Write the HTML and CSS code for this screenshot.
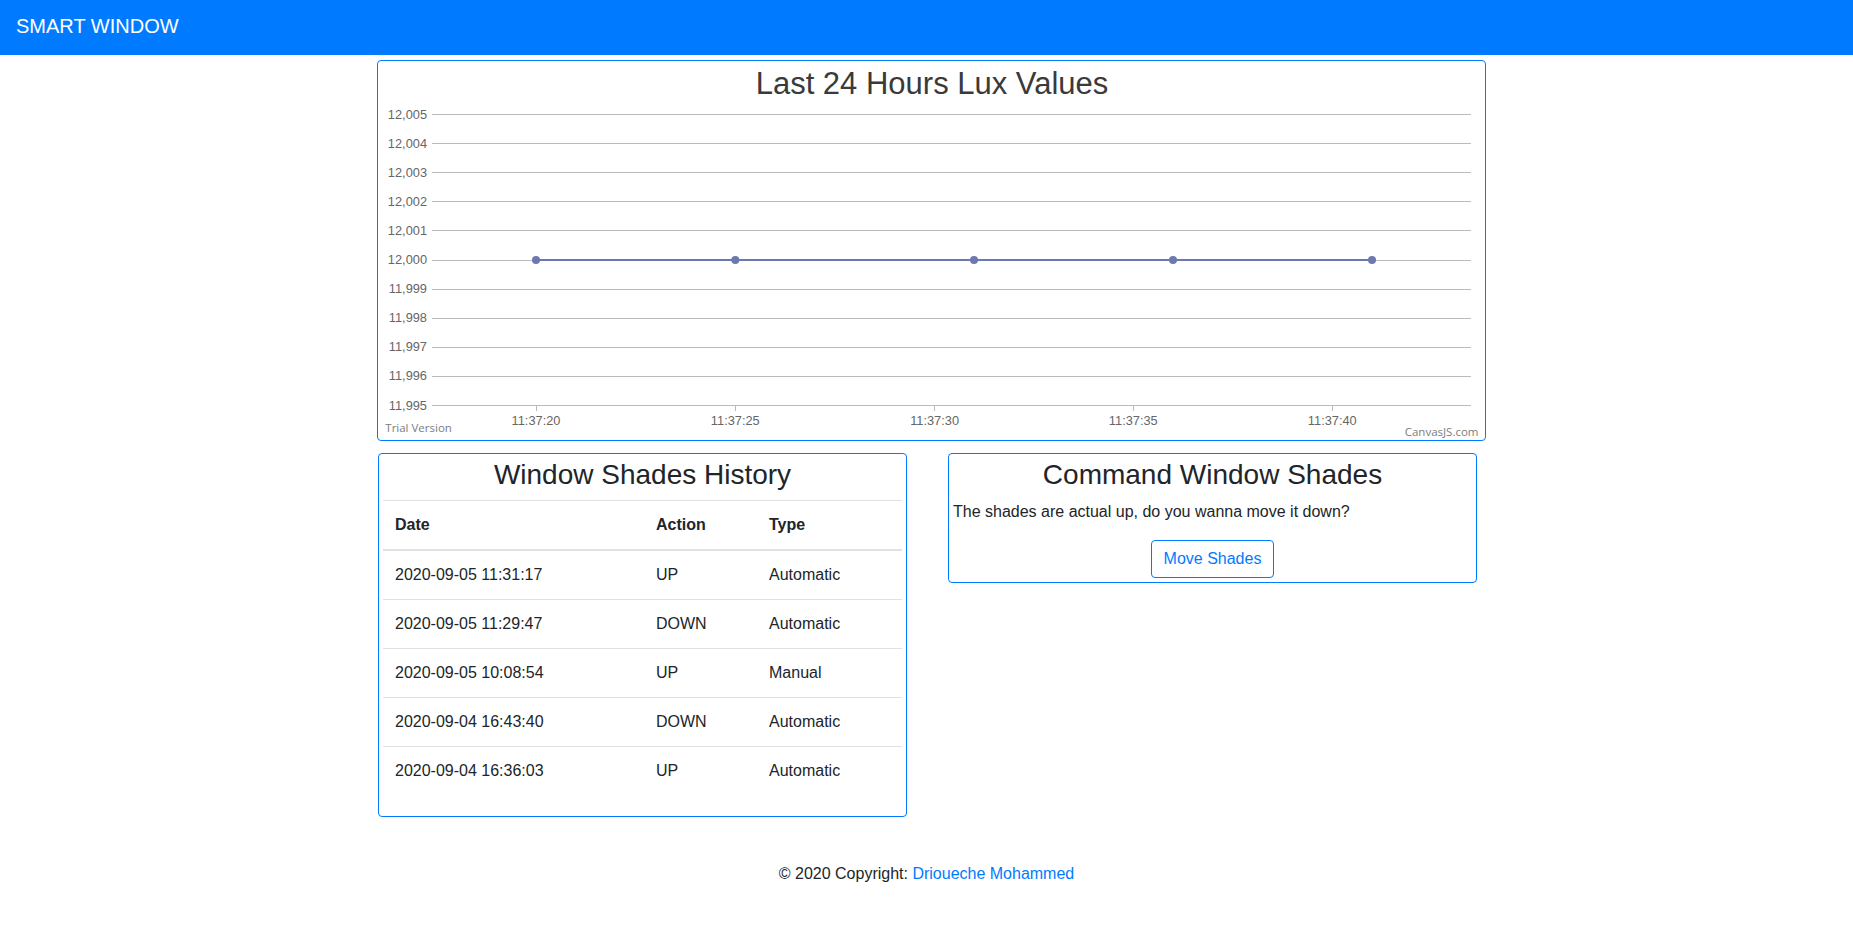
FILE: index.html
```html
<!DOCTYPE html>
<html lang="en">
<head>
<meta charset="utf-8">
<title>Smart Window</title>
<link rel="stylesheet" href="styles.css">
</head>
<body>
<nav class="navbar"><span class="brand">SMART WINDOW</span></nav>
<main class="page">
  <section class="card chart-card">
    <svg class="chart" width="1107" height="379" viewBox="0 0 1107 379" xmlns="http://www.w3.org/2000/svg">
      <text class="chart-title" x="554" y="32.7" text-anchor="middle">Last 24 Hours Lux Values</text>
      <g class="grid" shape-rendering="crispEdges">
        <line x1="54" x2="1093" y1="53.5" y2="53.5"/>
        <line x1="54" x2="1093" y1="82.6" y2="82.6"/>
        <line x1="54" x2="1093" y1="111.7" y2="111.7"/>
        <line x1="54" x2="1093" y1="140.8" y2="140.8"/>
        <line x1="54" x2="1093" y1="169.9" y2="169.9"/>
        <line x1="54" x2="1093" y1="199" y2="199"/>
        <line x1="54" x2="1093" y1="228.1" y2="228.1"/>
        <line x1="54" x2="1093" y1="257.2" y2="257.2"/>
        <line x1="54" x2="1093" y1="286.3" y2="286.3"/>
        <line x1="54" x2="1093" y1="315.4" y2="315.4"/>
        <line x1="54" x2="1093" y1="344.5" y2="344.5"/>
        <line x1="158" x2="158" y1="344.5" y2="349.5"/>
        <line x1="357.3" x2="357.3" y1="344.5" y2="349.5"/>
        <line x1="556.6" x2="556.6" y1="344.5" y2="349.5"/>
        <line x1="755.3" x2="755.3" y1="344.5" y2="349.5"/>
        <line x1="954.3" x2="954.3" y1="344.5" y2="349.5"/>
      </g>
      <g class="ylabels" text-anchor="end">
        <text x="49" y="57.5">12,005</text>
        <text x="49" y="86.6">12,004</text>
        <text x="49" y="115.7">12,003</text>
        <text x="49" y="144.8">12,002</text>
        <text x="49" y="173.9">12,001</text>
        <text x="49" y="203">12,000</text>
        <text x="49" y="232.1">11,999</text>
        <text x="49" y="261.2">11,998</text>
        <text x="49" y="290.3">11,997</text>
        <text x="49" y="319.4">11,996</text>
        <text x="49" y="348.5">11,995</text>
      </g>
      <g class="xlabels" text-anchor="middle">
        <text x="158" y="364">11:37:20</text>
        <text x="357.3" y="364">11:37:25</text>
        <text x="556.6" y="364">11:37:30</text>
        <text x="755.3" y="364">11:37:35</text>
        <text x="954.3" y="364">11:37:40</text>
      </g>
      <polyline class="series" points="158,199 357.3,199 596,199 795,199 994,199"/>
      <g class="markers">
        <circle cx="158" cy="199" r="4"/>
        <circle cx="357.3" cy="199" r="4"/>
        <circle cx="596" cy="199" r="4"/>
        <circle cx="795" cy="199" r="4"/>
        <circle cx="994" cy="199" r="4"/>
      </g>
      <text class="credit" x="7.3" y="371">Trial Version</text>
      <text class="credit" x="1100.5" y="375" text-anchor="end">CanvasJS.com</text>
    </svg>
  </section>

  <div class="row">
    <section class="card panel">
      <h3 class="panel-title">Window Shades History</h3>
      <table class="table">
        <colgroup>
          <col class="col-date">
          <col class="col-action">
          <col class="col-type">
        </colgroup>
        <thead>
          <tr><th>Date</th><th>Action</th><th>Type</th></tr>
        </thead>
        <tbody>
          <tr><td>2020-09-05 11:31:17</td><td>UP</td><td>Automatic</td></tr>
          <tr><td>2020-09-05 11:29:47</td><td>DOWN</td><td>Automatic</td></tr>
          <tr><td>2020-09-05 10:08:54</td><td>UP</td><td>Manual</td></tr>
          <tr><td>2020-09-04 16:43:40</td><td>DOWN</td><td>Automatic</td></tr>
          <tr><td>2020-09-04 16:36:03</td><td>UP</td><td>Automatic</td></tr>
        </tbody>
      </table>
    </section>

    <section class="card panel">
      <h3 class="panel-title">Command Window Shades</h3>
      <p class="panel-text">The shades are actual up, do you wanna move it down?</p>
      <div class="actions">
        <button class="btn" type="button">Move Shades</button>
      </div>
    </section>
  </div>
</main>
<footer class="footer">© 2020 Copyright: <a class="footer-link" href="#">Drioueche Mohammed</a></footer>
</body>
</html>
```

FILE: styles.css
```css
html, body {
  margin: 0;
  padding: 0;
}

body {
  font-family: "Liberation Sans", Arial, Helvetica, sans-serif;
  font-size: 16px;
  line-height: 1.5;
  color: #212529;
  background: #fff;
}

.navbar {
  box-sizing: border-box;
  height: 55px;
  padding: 11px 16px 14px;
  background: #007bff;
}

.brand {
  color: #fff;
  font-size: 20px;
  line-height: 30px;
  display: inline-block;
}

.page {
  width: 1109px;
  margin-left: calc(50% - 549.5px);
}

.card {
  box-sizing: border-box;
  border: 1px solid #007bff;
  border-radius: 4px;
  background: #fff;
}

.chart-card {
  margin-top: 5px;
  height: 381px;
}

.chart {
  display: block;
  font-family: "Liberation Sans", Arial, sans-serif;
}

.chart-title {
  font-size: 31px;
  fill: #3a3a3a;
}

.grid line {
  stroke: #bbbbbb;
  stroke-width: 1;
}

.ylabels text,
.xlabels text {
  font-size: 12.8px;
  fill: #666;
}

.series {
  fill: none;
  stroke: #6d78ad;
  stroke-width: 2;
}

.markers circle {
  fill: #6d78ad;
}

.credit {
  font-family: "Open Sans", "Noto Sans", sans-serif;
  font-size: 11.5px;
  fill: #7d7d7d;
}

.row {
  display: flex;
  align-items: flex-start;
  gap: 41px;
  margin-top: 12px;
  padding-left: 1px;
}

.panel {
  width: 529px;
  flex: 0 0 529px;
  padding: 4px;
}

.panel-title {
  margin: 0 0 8px;
  font-size: 28px;
  font-weight: 500;
  line-height: 1.2;
  text-align: center;
}

.table {
  width: 100%;
  border-collapse: collapse;
  table-layout: fixed;
  margin-bottom: 17px;
}

.col-date { width: 261px; }
.col-action { width: 113px; }
.col-type { width: 145px; }

.table th,
.table td {
  padding: 12px;
  text-align: left;
  vertical-align: top;
  border-top: 1px solid #dee2e6;
}

.table thead th {
  font-weight: bold;
  vertical-align: bottom;
  border-bottom: 2px solid #dee2e6;
}

.panel-text {
  margin: 0 0 16px;
}

.actions {
  text-align: center;
}

.btn {
  display: inline-block;
  font-family: inherit;
  font-size: 16px;
  line-height: 1.5;
  padding: 6px 12px;
  color: #007bff;
  background: transparent;
  border: 1px solid #007bff;
  border-radius: 4px;
  cursor: pointer;
}

.footer {
  margin-top: 29px;
  padding: 16px 0;
  text-align: center;
}

.footer-link {
  color: #007bff;
  text-decoration: none;
}
```
